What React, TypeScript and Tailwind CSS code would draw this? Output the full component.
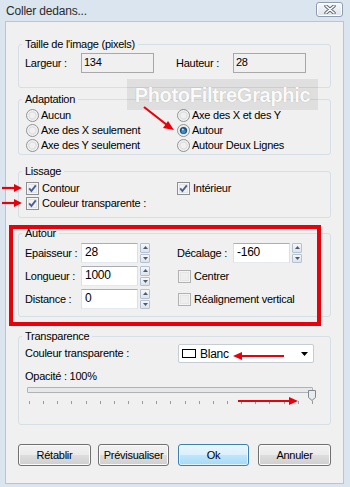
import React from "react";

const Check = ({ checked = false, disabled = false }: { checked?: boolean; disabled?: boolean }) => (
  <svg width="13" height="13" viewBox="0 0 13 13" className="shrink-0">
    <rect x="0.5" y="0.5" width="12" height="12" fill={disabled ? "#f4f4f4" : "#f6f6f6"} stroke={disabled ? "#b1b1b1" : "#8e8f8f"} />
    <rect x="2" y="2" width="9" height="9" fill={disabled ? "#e6e6e6" : "#e2e4e8"} />
    <rect x="3" y="3" width="7" height="7" fill={disabled ? "#eeeeee" : "#f1f2f4"} />
    {checked && (
      <path d="M3.2 6.4 L5.4 9 L9.8 3.4" fill="none" stroke="#4a5f97" strokeWidth="1.9" />
    )}
  </svg>
);

const Radio = ({ checked = false }: { checked?: boolean }) => (
  <svg width="13" height="13" viewBox="0 0 13 13" className="shrink-0">
    <circle cx="6.5" cy="6.5" r="6" fill="#f3f3f3" stroke="#8f9090" />
    <circle cx="6.5" cy="6.5" r="4.2" fill="#dcdddf" />
    {checked ? (
      <>
        <circle cx="6.5" cy="6.5" r="3.6" fill="#1a4f7c" />
        <circle cx="6.5" cy="7.2" r="2.2" fill="#3c8ac6" />
        <circle cx="5.8" cy="5.6" r="1" fill="#bfe2f7" />
      </>
    ) : (
      <circle cx="6.5" cy="6.5" r="3" fill="#f0f0f1" />
    )}
  </svg>
);

const Spin = () => (
  <div className="flex flex-col gap-[1px] w-[10px] h-[20px] ml-[2px]">
    {[0, 1].map((i) => (
      <div
        key={i}
        className="flex-1 flex items-center justify-center border border-[#b4c1d1] rounded-[1px] bg-[linear-gradient(#f5f7fa,#dde3ea)]"
      >
        <svg width="5" height="3" viewBox="0 0 5 3">
          {i === 0 ? <path d="M0 3 L2.5 0 L5 3Z" fill="#4d5a6b" /> : <path d="M0 0 L2.5 3 L5 0Z" fill="#4d5a6b" />}
        </svg>
      </div>
    ))}
  </div>
);

const Group = ({
  title,
  className = "",
  children,
}: {
  title: string;
  className?: string;
  children: React.ReactNode;
}) => (
  <fieldset className={`w-[313px] border border-[#d5dfe5] rounded-[3px] px-[7px] ${className}`}>
    <legend className="-ml-[4px] px-[3px] leading-[13px]">{title}</legend>
    {children}
  </fieldset>
);

const Btn = ({ label, primary = false }: { label: string; primary?: boolean }) => (
  <div
    className={`h-[22px] flex items-center justify-center rounded-[3px] border ${
      primary
        ? "w-[71px] border-[#3c7fb1] bg-[linear-gradient(#eaf6fd_0%,#d9f0fc_50%,#bee6fd_51%,#a7d9f5_100%)] shadow-[inset_0_0_0_1px_#ffffffaa]"
        : "w-[73px] border-[#707070] bg-[linear-gradient(#f2f2f2_0%,#ebebeb_50%,#dddddd_51%,#cfcfcf_100%)] shadow-[inset_0_0_0_1px_#fbfbfb]"
    }`}
  >
    {label}
  </div>
);

export default function App() {
  return (
    <div className="relative w-[350px] h-[487px] bg-[#dbe5f0] flex flex-col text-[11px] tracking-[-0.25px] text-black font-['Liberation_Sans',Arial,sans-serif] overflow-hidden">
      {/* title bar */}
      <div className="h-[21px] flex items-center justify-between pl-[6px] pr-[7px] shrink-0">
        <span className="text-[12px] tracking-[-0.2px] text-[#2b2b2b] mt-[1px]">Coller dedans...</span>
        <div className="w-[27px] h-[15px] mb-[2px] rounded-[3px] border border-[#8f9cab] bg-[linear-gradient(#f7f9fb,#dde4ec)] flex items-center justify-center shadow-[inset_0_0_0_1px_#ffffff]">
          <svg width="12" height="9" viewBox="0 0 12 9">
            <path d="M2 1 L10 8 M10 1 L2 8" stroke="#5d6672" strokeWidth="3.4" strokeLinecap="round" />
            <path d="M2 1 L10 8 M10 1 L2 8" stroke="#ffffff" strokeWidth="1.6" strokeLinecap="round" />
          </svg>
        </div>
      </div>

      {/* content */}
      <div className="flex-1 ml-[5px] mr-[6px] mb-[3px] border border-[#b7c6d6] bg-[#f0f0f0] pl-[12px] pt-[16px] flex flex-col">
        <Group title="Taille de l'image (pixels)" className="pb-[14px]">
          <div className="grid grid-cols-[150px_1fr] mt-[2px]">
            <div className="flex items-center">
              <span className="w-[56px] -ml-[1px]">Largeur :</span>
              <div className="w-[73px] h-[20px] border border-[#a9a9a9] bg-[#f0f0f0] pl-[2px] pt-[1px] leading-[14px]">134</div>
            </div>
            <div className="flex items-center">
              <span className="w-[57px]">Hauteur :</span>
              <div className="w-[73px] h-[20px] border border-[#a9a9a9] bg-[#f0f0f0] pl-[2px] pt-[1px] leading-[14px]">28</div>
            </div>
          </div>
        </Group>

        <Group title="Adaptation" className="mt-[5px] pb-[1px]">
          <div className="grid grid-cols-[151px_1fr] auto-rows-[15px] mt-[2px]">
            {[
              ["Aucun", false],
              ["Axe des X et des Y", false],
              ["Axe des X seulement", false],
              ["Autour", true],
              ["Axe des Y seulement", false],
              ["Autour Deux Lignes", false],
            ].map(([t, c]) => (
              <div key={t as string} className="flex items-center gap-[2px]">
                <Radio checked={c as boolean} />
                <span>{t as string}</span>
              </div>
            ))}
          </div>
        </Group>

        <Group title="Lissage" className="mt-[10px] pb-[6px]">
          <div className="grid grid-cols-[151px_1fr] auto-rows-[15px] mt-[3px]">
            <div className="flex items-center gap-[3px]">
              <Check checked />
              <span>Contour</span>
            </div>
            <div className="flex items-center gap-[3px]">
              <Check checked />
              <span>Intérieur</span>
            </div>
            <div className="flex items-center gap-[3px]">
              <Check checked />
              <span>Couleur transparente :</span>
            </div>
          </div>
        </Group>

        <Group title="Autour" className="mt-[9px] pb-[7px]">
          <div className="grid grid-cols-[152px_1fr] auto-rows-[20px] gap-y-[3px] mt-[3px]">
            {[
              ["Epaisseur :", "28"],
              ["Décalage :", "-160"],
              ["Longueur :", "1000"],
              null,
              ["Distance :", "0"],
              null,
            ].map((r, i) =>
              r ? (
                <div key={i} className="flex items-center">
                  <span className="w-[56px] -ml-[1px]">{r[0]}</span>
                  <div className="w-[57px] h-[20px] border border-[#abadb3] border-l-[#dbdfe6] border-r-[#dbdfe6] border-b-[#e3e9ef] bg-white pl-[3px] pt-[1px] leading-[15px] text-[12px]">
                    {r[1]}
                  </div>
                  <Spin />
                </div>
              ) : (
                <div key={i} className="flex items-center gap-[3px]">
                  <Check disabled />
                  <span>{i === 3 ? "Centrer" : "Réalignement vertical"}</span>
                </div>
              )
            )}
          </div>
        </Group>

        <Group title="Transparence" className="mt-[13px] pb-[15px]">
          <div className="grid grid-cols-[152px_1fr] mt-[1px]">
            <div className="flex items-center -ml-[1px]">Couleur transparente :</div>
            <div className="w-[136px] h-[19px] border border-[#c6ccd3] rounded-[2px] bg-white flex items-center pl-[3px] pr-[5px]">
              <div className="w-[14px] h-[9px] border border-black bg-white mr-[4px]" />
              <span className="flex-1 text-[12px]">Blanc</span>
              <svg width="7" height="4" viewBox="0 0 7 4">
                <path d="M0 0 L7 0 L3.5 4Z" fill="#000" />
              </svg>
            </div>
          </div>
          <div className="mt-[7px] -ml-[1px] leading-[13px]">Opacité : 100%</div>
          <div className="relative mt-[2px] h-[22px]">
            <div className="ml-[1px] w-[286px] h-[6px] mt-[4px] border border-[#b0b3b6] bg-[#e6e8ea] rounded-[1px]" />
            <svg className="absolute left-[282px] top-[3px]" width="8" height="11" viewBox="0 0 8 11">
              <path d="M0.5 0.5 H7.5 V7.5 L4 10.5 L0.5 7.5Z" fill="#e9ebee" stroke="#7f8790" />
            </svg>
            <div className="flex justify-between w-[284px] ml-[3px] mt-[8px]">
              {Array.from({ length: 21 }).map((_, i) => (
                <div key={i} className="w-[1px] h-[3px] bg-[#9a9a9a]" />
              ))}
            </div>
          </div>
        </Group>

        <div className="flex gap-[7px] mt-[19px]">
          <Btn label="Rétablir" />
          <div className="h-[22px] w-[71px] flex items-center justify-center rounded-[3px] border border-[#707070] bg-[linear-gradient(#f2f2f2_0%,#ebebeb_50%,#dddddd_51%,#cfcfcf_100%)] shadow-[inset_0_0_0_1px_#fbfbfb]">
            Prévisualiser
          </div>
          <div className="ml-[2px]">
            <Btn label="Ok" primary />
          </div>
          <div className="ml-[2px]">
            <Btn label="Annuler" />
          </div>
        </div>
      </div>

      {/* watermark */}
      <div className="absolute left-[127px] top-[79px] w-[191px] h-[31px] bg-[#00000012] flex items-center justify-center">
        <span className="text-[20px] font-bold tracking-[-0.3px] text-[#fafafa] [text-shadow:0_0_1px_#a8a8a8]">
          PhotoFiltreGraphic
        </span>
      </div>

      {/* red annotation box */}
      <div className="absolute left-[9px] top-[225px] w-[312px] h-[101px] border-[4px] border-[#e8000b]" />

      {/* arrows */}
      <svg className="absolute left-0 top-0 pointer-events-none" width="350" height="487" viewBox="0 0 350 487">
        <g stroke="#e8000b" strokeWidth="2.2" fill="#e8000b">
          <line x1="144" y1="107" x2="167" y2="125" />
          <path d="M174 130 L163 128 L168 121Z" stroke="none" />
          <line x1="2" y1="188" x2="15" y2="188" />
          <path d="M22 188 L14 184 L14 192Z" stroke="none" />
          <line x1="2" y1="203" x2="15" y2="203" />
          <path d="M22 203 L14 199 L14 207Z" stroke="none" />
          <line x1="240" y1="356" x2="284" y2="356" />
          <path d="M233 356 L242 352 L242 360Z" stroke="none" />
          <line x1="238" y1="401" x2="290" y2="401" />
          <path d="M298 401 L289 397 L289 405Z" stroke="none" />
        </g>
      </svg>
    </div>
  );
}
